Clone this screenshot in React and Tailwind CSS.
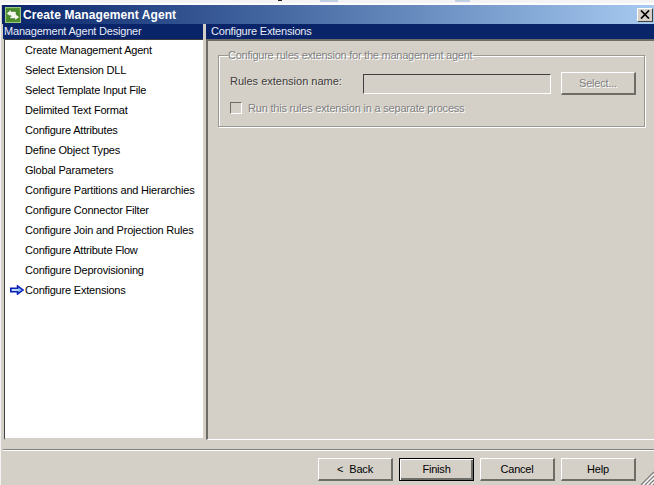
const steps = [
  "Create Management Agent",
  "Select Extension DLL",
  "Select Template Input File",
  "Delimited Text Format",
  "Configure Attributes",
  "Define Object Types",
  "Global Parameters",
  "Configure Partitions and Hierarchies",
  "Configure Connector Filter",
  "Configure Join and Projection Rules",
  "Configure Attribute Flow",
  "Configure Deprovisioning",
  "Configure Extensions",
];

function Btn({ children, def, disabled }) {
  return (
    <button
      className={
        "w-[75px] h-[23px] flex items-center justify-center bg-[#d4d0c8] text-[11px] tracking-[-0.2px] leading-none " +
        (disabled
          ? "text-[#808080] [text-shadow:1px_1px_0_#fff] border-l border-t border-l-white border-t-white border-r-2 border-b-2 border-r-[#6e6c67] border-b-[#6e6c67]"
          : def
          ? "text-black border border-black [box-shadow:inset_1px_1px_0_#fff,inset_-2px_-2px_0_#6e6c67]"
          : "text-black border-l border-t border-l-white border-t-white border-r-2 border-b-2 border-r-[#6e6c67] border-b-[#6e6c67]")
      }
    >
      {children}
    </button>
  );
}

export default function App() {
  return (
    <div className="w-[654px] h-[485px] overflow-hidden bg-[#d4d0c8] border-l border-l-[#f4f4f4] flex flex-col font-['Liberation_Sans',Arial,sans-serif] text-[11px] tracking-[-0.2px] text-black">
      <div className="h-[5px] bg-[#f4f4f4] border-b-2 border-white flex shrink-0">
        <span className="ml-[277px] w-[4px] h-[1px] bg-[#222]" />
        <span className="ml-[38px] w-[18px] h-[2px] bg-[#c3cfe2]" />
        <span className="ml-[117px] w-[15px] h-[2px] bg-[#c3cfe2]" />
      </div>

      <div className="h-[19px] ml-[1px] shrink-0 flex items-center bg-gradient-to-r from-[#0a246a] to-[#a6caf0] pr-[1px]">
        <svg width="16" height="16" viewBox="0 0 16 16" className="ml-[3px] shrink-0">
          <rect x="0.5" y="0.5" width="15" height="15" fill="#5fa03a" stroke="#9cc77a" />
          <rect x="1.5" y="1.5" width="13" height="13" fill="#4a8c2c" />
          <path d="M1.5 6.5 L6 2.5 V4.5 H11 V7.5 L14.5 10 L10 13.5 V11.5 H5 V8.5 H6 V10 Z" fill="#f6f8ee" stroke="#3b6f22" strokeWidth="0.5" />
        </svg>
        <span className="ml-[2px] text-white font-bold text-[12px] tracking-[0.1px] whitespace-nowrap">Create Management Agent</span>
        <button className="ml-auto w-[16px] h-[14px] bg-[#d4d0c8] flex items-center justify-center border-l border-t border-l-white border-t-white border-r border-b border-r-[#404040] border-b-[#404040]">
          <svg width="10" height="9" viewBox="0 0 10 9">
            <path d="M1 0.5 L9 8.5 M9 0.5 L1 8.5" stroke="#000" strokeWidth="1.7" />
          </svg>
        </button>
      </div>

      <div className="flex-1 min-h-0 flex pl-[2px]">
        <div className="w-[200px] flex flex-col shrink-0 pb-[9px]">
          <div className="h-[15px] bg-[#0a246a] text-[#e8ecf8] pl-[1px] leading-[15px] whitespace-nowrap">Management Agent Designer</div>
          <div className="flex-1 ml-[1px] bg-white border-l border-t border-l-[#404040] border-t-[#404040] border-b-2 border-b-[#d4d0c8]">
            {steps.map((s, i) => (
              <div key={s} className="h-[20px] flex items-center whitespace-nowrap">
                <span className="w-[20px] flex justify-end pr-[1px] shrink-0">
                  {i === steps.length - 1 && (
                    <svg width="14" height="10" viewBox="0 0 14 10">
                      <path d="M0.75 3.25 H7.5 V0.9 L13.2 5 L7.5 9.1 V6.75 H0.75 Z" fill="#7fb4f5" stroke="#0a1fb4" strokeWidth="1.5" />
                      <path d="M2 5 H8.5" stroke="#ffffff" strokeWidth="1" />
                    </svg>
                  )}
                </span>
                <span>{s}</span>
              </div>
            ))}
          </div>
        </div>

        <div className="flex-1 ml-[3px] flex flex-col pb-[9px]">
          <div className="h-[15px] bg-[#0a246a] text-[#e8ecf8] pl-[5px] leading-[15px] whitespace-nowrap">Configure Extensions</div>
          <div className="flex-1 border-l-2 border-t-2 border-l-[#6e6c67] border-t-[#6e6c67] border-b border-b-white pl-[10px] pr-[10px] pt-[7px]">
            <fieldset className="h-[79px] border border-[#9a9893] [box-shadow:1px_1px_0_#fff,inset_1px_1px_0_#fff] m-0 p-0 pl-[11px] pr-[8px]">
              <legend className="ml-[-2px] px-0 text-[#808080] [text-shadow:1px_1px_0_#fff] tracking-[-0.25px] leading-[14px] whitespace-nowrap">
                Configure rules extension for the management agent
              </legend>
              <div className="flex items-center mt-[10px]">
                <span className="w-[133px] mb-[4px] text-[#3c3c3c] tracking-normal [text-shadow:1px_1px_0_#e8e4dc] whitespace-nowrap">Rules extension name:</span>
                <div className="w-[188px] h-[20px] border-l border-t border-l-[#404040] border-t-[#404040] border-r border-b border-r-white border-b-white" />
                <div className="ml-[10px]">
                  <Btn disabled>Select...</Btn>
                </div>
              </div>
              <div className="flex items-center mt-[5px]">
                <span className="w-[12px] h-[12px] border-l border-t border-l-[#6e6c67] border-t-[#6e6c67] border-r border-b border-r-white border-b-white shrink-0" />
                <span className="ml-[6px] text-[#808080] [text-shadow:1px_1px_0_#fff] whitespace-nowrap">Run this rules extension in a separate process</span>
              </div>
            </fieldset>
          </div>
        </div>
      </div>

      <div className="h-[36px] shrink-0 ml-[2px] border-t border-t-[#808080] [box-shadow:inset_0_1px_0_#fff] flex items-start pt-[8px]">
        <div className="ml-[315px] flex gap-[6px]">
          <Btn><span className="mr-[6px]">&lt;</span>Back</Btn>
          <Btn def>Finish</Btn>
          <Btn>Cancel</Btn>
          <Btn>Help</Btn>
        </div>
        <svg width="14" height="14" viewBox="0 0 14 14" className="ml-auto self-end shrink-0">
          <path d="M14 1 L1 14 M14 5 L5 14 M14 9 L9 14 M14 13 L13 14" stroke="#808080" strokeWidth="1.4" />
          <path d="M14 3 L3 14 M14 7 L7 14 M14 11 L11 14" stroke="#ffffff" strokeWidth="1.2" />
        </svg>
      </div>
    </div>
  );
}
